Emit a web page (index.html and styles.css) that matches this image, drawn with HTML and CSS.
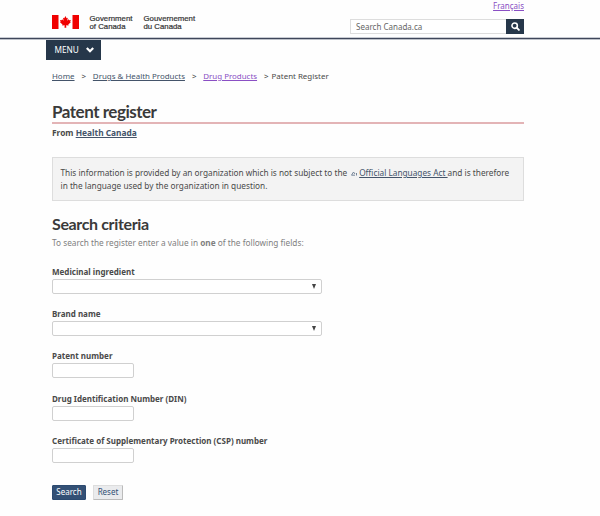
FILE: index.html
```html
<!DOCTYPE html>
<html lang="en">
	<head>
		<meta charset="utf-8">
		<title>Patent register</title>
		<link rel="stylesheet" href="styles.css">
	</head>

	<body>
		<header class="header">
			<a class="lang" href="#">Français</a>
			<div class="brand-row">
				<div class="brand">
					<svg class="flag" viewBox="0 0 54 28">
						<path fill="#f00000" d="M0 0h13v28H0zM41 0h13v28H41z"/>
						<path fill="#f00000" d="M27 2l-2.500 4.500-2.500-1 1.200 6-3-3-1 2-3.200-.5 1.200 3.500-1.200 1 5 4.500-.7 2.200 5-.7-.3 5h3.600l-.3-5 5 .7-.7-2.200 5-4.500-1.200-1 1.200-3.500-3.200 .5-1-2-3 3 1.200-6-2.500 1z"/>
					</svg>
					<div class="brand-name">Government<br>of Canada</div>
					<div class="brand-name">Gouvernement<br>du Canada</div>
				</div>
				<form class="site-search">
					<input class="site-search-input" type="text" placeholder="Search Canada.ca">
					<button class="site-search-button" type="button" aria-label="Search">
						<svg viewBox="0 0 16 16"><circle cx="6.500" cy="6.500" r="4.800" fill="none" stroke="#fff" stroke-width="2.800"/><path d="M10 10l4 4" stroke="#fff" stroke-width="3.400" stroke-linecap="round"/></svg>
					</button>
				</form>
			</div>
		</header>

		<nav class="menu">
			<span>MENU</span>
			<svg class="menu-arrow" viewBox="0 0 8 6"><path d="M.8 1l3.200 3.200L7.200 1" fill="none" stroke="#fff" stroke-width="2.200"/></svg>
		</nav>

		<main class="container">
			<div class="breadcrumb">
				<a class="crumb" href="#">Home</a>
				<span class="sep">&gt;</span>
				<a class="crumb" href="#">Drugs &amp; Health Products</a>
				<span class="sep">&gt;</span>
				<a class="crumb visited" href="#">Drug Products</a>
				<span class="sep last">&gt;</span>
				<span>Patent Register</span>
			</div>

			<h1 class="title">Patent register</h1>
			<p class="from">From <a href="#">Health Canada</a></p>

			<div class="notice">
				<div class="notice-line"><span>This information is provided by an organization which is not subject to the</span><svg class="external" viewBox="0 0 6 5"><path d="M.5 4.200L2.500 1l1.500 2M.5 4.200h3.500M5.500 2v2.500" fill="none" stroke="#66788f" stroke-width=".9"/></svg><a href="#">Official Languages Act </a><span>and is therefore</span></div>
				<div class="notice-line"><span>in the language used by the organization in question.</span></div>
			</div>

			<h2 class="subtitle">Search criteria</h2>
			<p class="intro">To search the register enter a value in <b>one</b> of the following fields:</p>

			<form class="criteria">
				<div class="field">
					<label>Medicinal ingredient</label>
					<div class="combo"><span class="combo-arrow"></span></div>
				</div>
				<div class="field">
					<label>Brand name</label>
					<div class="combo"><span class="combo-arrow"></span></div>
				</div>
				<div class="field">
					<label for="patent">Patent number</label>
					<input class="textbox" id="patent" type="text">
				</div>
				<div class="field">
					<label for="din">Drug Identification Number (DIN)</label>
					<input class="textbox" id="din" type="text">
				</div>
				<div class="field">
					<label for="csp">Certificate of Supplementary Protection (CSP) number</label>
					<input class="textbox" id="csp" type="text">
				</div>
				<div class="buttons">
					<button class="btn btn-search" type="button">Search</button>
					<button class="btn btn-reset" type="button">Reset</button>
				</div>
			</form>
		</main>
	</body>
</html>
```

FILE: styles.css
```css
* {
	box-sizing: border-box;
}

body {
	margin: 0;
	background-color: #fefefe;
	font-family: "Noto Sans", sans-serif;
	font-size: 8.27px;
	line-height: 12px;
	color: #4a4a4a;
}

a {
	color: #44546a;
}

h1, h2, p {
	margin: 0;
}

input {
	font-family: inherit;
}

.header {
	height: 40px;
	padding: 0 76px 0 52px;
	border-bottom: 1px solid #bcc0c8;
	box-shadow: inset 0 -1px #3e465a, inset 0 -2px #c9ccd3;
}

.lang {
	display: block;
	height: 14px;
	font-size: 8px;
	line-height: 11px;
	text-align: right;
	color: #8a4fc4;
}

.brand-row {
	display: flex;
	justify-content: space-between;
}

.brand {
	display: flex;
}

.flag {
	width: 27px;
	height: 14px;
	margin-top: 1px;
}

.brand-name {
	width: 54px;
	margin-left: 10.5px;
	margin-top: 1px;
	font: 7.8px/7.5px "Liberation Sans", sans-serif;
	color: #333;
	-webkit-text-stroke: .2px #333;
}

.brand-name + .brand-name {
	margin-left: 0;
}

.site-search {
	display: flex;
	margin-top: 5px;
}

.site-search-input {
	width: 156px;
	height: 15px;
	padding: 0 5px;
	border: 1px solid #ddd;
	border-right: 0;
	font-size: 8px;
	background-color: #fff;
}

.site-search-input::placeholder {
	color: #666;
}

.site-search-button {
	display: flex;
	align-items: center;
	justify-content: center;
	width: 18px;
	height: 15px;
	padding: 0;
	border: 0;
	background-color: #26374a;
}

.site-search-button svg {
	width: 9px;
	height: 9px;
}

.menu {
	display: flex;
	align-items: center;
	width: 55px;
	height: 20px;
	margin-left: 46px;
	padding-left: 8.5px;
	background-color: #26374a;
	color: #fff;
}

.menu-arrow {
	width: 8px;
	height: 6px;
	margin-left: 7px;
}

.container {
	width: 472px;
	margin-left: 52px;
}

.breadcrumb {
	display: flex;
	margin-top: 10px;
	font-size: 7.93px;
	white-space: nowrap;
}

.sep {
	width: 18.3px;
	padding-left: 7px;
}

.sep.last {
	width: 14.5px;
}

.crumb.visited {
	color: #8a4fc4;
}

.title {
	height: 22px;
	margin-top: 20px;
	border-bottom: 2px solid #e3b4b6;
	font: bold 17px/20px Lato, sans-serif;
	letter-spacing: -.48px;
	color: #3a3a3a;
}

.from {
	margin-top: 3px;
	font-size: 8.35px;
	font-weight: bold;
}

.notice {
	height: 44px;
	margin-top: 18px;
	padding: 8px 7.5px;
	border: 1px solid #ddd;
	background-color: #f3f3f3;
}

.notice-line {
	display: flex;
	height: 13px;
	line-height: 13px;
	white-space: pre;
}

.external {
	flex: none;
	width: 6px;
	height: 5px;
	margin: 5px 2px 0 4px;
}

.subtitle {
	margin-top: 13px;
	font: bold 16px/20px Lato, sans-serif;
	letter-spacing: -.36px;
	color: #3a3a3a;
}

.intro {
	margin-top: 3px;
	color: #808080;
}

.criteria {
	margin-top: 17px;
}

.field {
	height: 42.2px;
}

.field label {
	display: block;
	height: 13px;
	font-size: 8.02px;
	font-weight: bold;
}

.combo {
	display: flex;
	align-items: center;
	justify-content: flex-end;
	width: 270px;
	height: 15px;
	padding-right: 5px;
	border: 1px solid #d0d0d0;
	border-radius: 2px;
	background-color: #fff;
}

.combo-arrow {
	border: 2.5px solid transparent;
	border-top: 5px solid #444;
	border-bottom: 0;
}

.textbox {
	display: block;
	width: 82px;
	height: 15px;
	border: 1px solid #d0d0d0;
	border-radius: 2px;
	background-color: #fff;
}

.buttons {
	display: flex;
	gap: 7px;
	margin-top: 8px;
}

.btn {
	height: 15px;
	padding: 0;
	border: 1px solid #2c4a70;
	border-radius: 1px;
	font: 8px/12px "Noto Sans", sans-serif;
}

.btn-search {
	width: 34px;
	background-color: #335075;
	color: #fff;
}

.btn-reset {
	width: 30px;
	border-color: #ddd #bbb #bbb #ddd;
	background-color: #eaebed;
	color: #335075;
}
```
